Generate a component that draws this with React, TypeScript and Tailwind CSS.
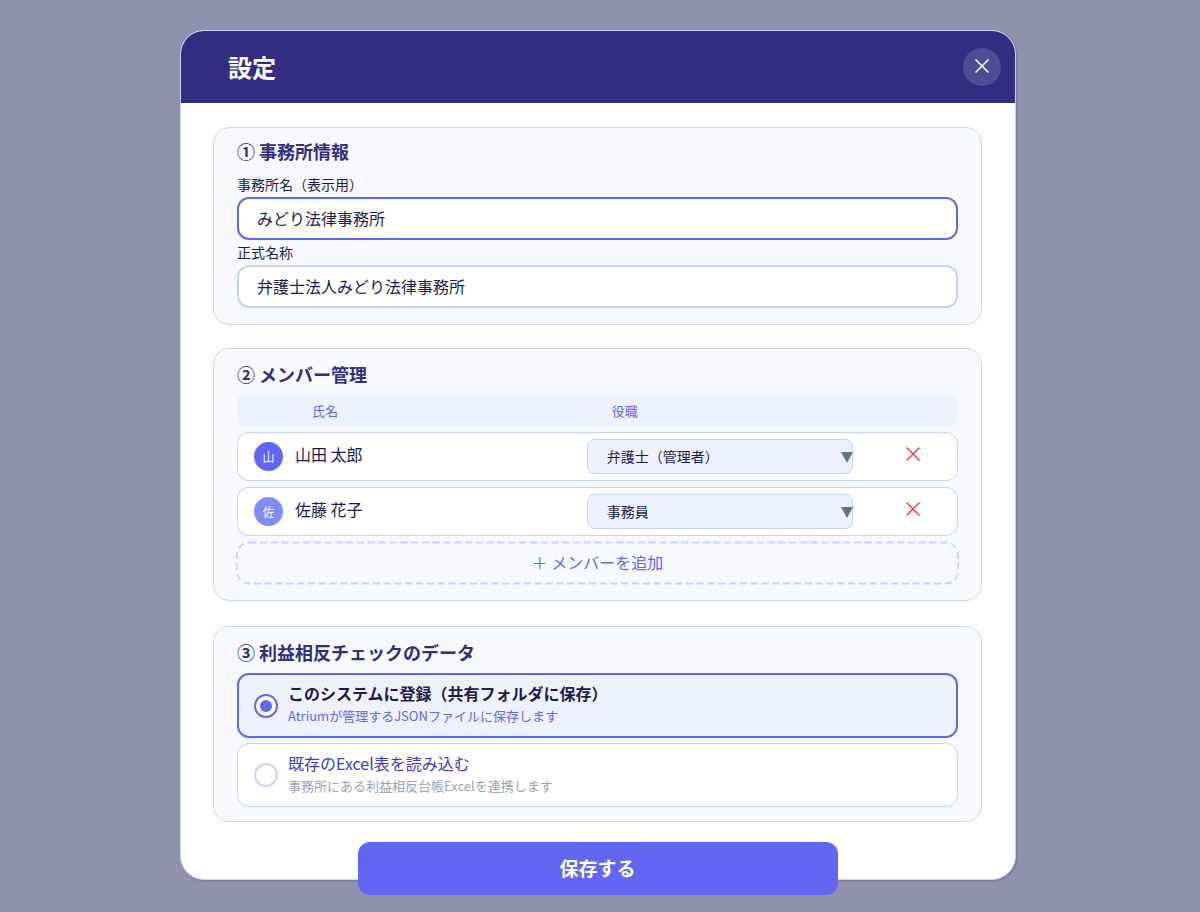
import { useState } from "react";

type Member = { id: number; initial: string; name: string; role: string; avatar: string };

const ROLES = ["弁護士（管理者）", "弁護士", "事務員"];

const INITIAL_MEMBERS: Member[] = [
  { id: 1, initial: "山", name: "山田 太郎", role: "弁護士（管理者）", avatar: "bg-[#6366f1]" },
  { id: 2, initial: "佐", name: "佐藤 花子", role: "事務員", avatar: "bg-[#818cf8]" },
];

const SOURCES = [
  {
    value: "system",
    title: "このシステムに登録（共有フォルダに保存）",
    note: "Atriumが管理するJSONファイルに保存します",
  },
  {
    value: "excel",
    title: "既存のExcel表を読み込む",
    note: "事務所にある利益相反台帳Excelを連携します",
  },
];

function CrossIcon() {
  return (
    <svg width="14" height="14" viewBox="0 0 14 14" fill="none" stroke="currentColor" strokeWidth="1.5" aria-hidden="true">
      <path d="M0.5 0.5L13.5 13.5M13.5 0.5L0.5 13.5" />
    </svg>
  );
}

function Section({ title, className, children }: { title: string; className: string; children: React.ReactNode }) {
  return (
    <section className={`rounded-2xl border border-[#c7d2fe] bg-[#f8f9ff] px-[23px] ${className}`}>
      <h2 className="text-[18px] leading-7 font-bold text-[#312e81]">{title}</h2>
      {children}
    </section>
  );
}

function TextField({ id, label, initial, active }: { id: string; label: string; initial: string; active?: boolean }) {
  const [value, setValue] = useState(initial);
  return (
    <div>
      <label htmlFor={id} className="block text-sm leading-[25px]">
        {label}
      </label>
      <input
        id={id}
        type="text"
        value={value}
        onChange={(e) => setValue(e.target.value)}
        className={`block h-[43px] w-full rounded-xl border-2 bg-white px-[18px] pb-0.5 text-base outline-none ${
          active ? "border-[#6366f1]" : "border-[#c7d2fe]"
        }`}
      />
    </div>
  );
}

export default function App() {
  const [members, setMembers] = useState(INITIAL_MEMBERS);
  const [source, setSource] = useState("system");

  const changeRole = (id: number, role: string) =>
    setMembers(members.map((m) => (m.id === id ? { ...m, role } : m)));
  const removeMember = (id: number) => setMembers(members.filter((m) => m.id !== id));
  const addMember = () =>
    setMembers([...members, { id: Date.now(), initial: "新", name: "新規 メンバー", role: "事務員", avatar: "bg-[#818cf8]" }]);

  return (
    <div className="min-h-screen bg-[#9091ad] pt-[30px] pr-1 pb-8 font-['Noto_Sans_CJK_JP',sans-serif] text-[#1e1b4b]">
      <main className="mx-auto w-full max-w-[836px] rounded-3xl border border-[#c7d2fe] bg-white shadow-[1px_1px_2px_rgba(30,27,75,0.25)]">
        <header className="flex h-[72px] items-center justify-between rounded-t-[23px] bg-[#312e81] pr-[14px] pl-[47px] text-white">
          <h1 className="text-2xl font-bold">設定</h1>
          <button
            type="button"
            aria-label="閉じる"
            className="flex size-[38px] items-center justify-center rounded-full bg-white/15 pb-0.5"
          >
            <CrossIcon />
          </button>
        </header>

        <div className="flex flex-col pt-6 pr-[33px] pl-8">
          <Section title="① 事務所情報" className="pt-[9px] pb-4">
            <div className="pt-[7px]">
              <TextField id="display-name" label="事務所名（表示用）" initial="みどり法律事務所" active />
              <TextField id="official-name" label="正式名称" initial="弁護士法人みどり法律事務所" />
            </div>
          </Section>

          <Section title="② メンバー管理" className="mt-[23px] pt-[11px] pb-4">
            <table className="w-full table-fixed border-separate border-spacing-x-0 border-spacing-y-[6px]">
              <thead>
                <tr className="h-8 text-left text-[13px] text-[#6366f1]">
                  <th scope="col" className="w-[48.5%] rounded-l-lg bg-[#eef2ff] pt-0.5 pr-0 pl-[75px] font-normal">
                    氏名
                  </th>
                  <th scope="col" className="w-[39%] bg-[#eef2ff] pt-0.5 pr-0 pl-[25px] font-normal">
                    役職
                  </th>
                  <th scope="col" className="w-[12.5%] rounded-r-lg bg-[#eef2ff]" aria-label="削除" />
                </tr>
              </thead>
              <tbody>
                {members.map((m) => (
                  <tr key={m.id} className="h-[49px]">
                    <td className="rounded-l-xl border-y border-l border-[#c7d2fe] bg-white p-0 pl-4">
                      <div className="flex items-center gap-3">
                        <span
                          className={`flex size-[29px] items-center justify-center rounded-full text-xs text-white ${m.avatar}`}
                        >
                          {m.initial}
                        </span>
                        <span className="pb-[5px] text-base leading-6">{m.name}</span>
                      </div>
                    </td>
                    <td className="border-y border-[#c7d2fe] bg-white p-0 pr-[15px]">
                      <div className="relative">
                        <select
                          aria-label={`${m.name}の役職`}
                          value={m.role}
                          onChange={(e) => changeRole(m.id, e.target.value)}
                          className="block h-[35px] w-full appearance-none rounded-lg border border-[#c7d2fe] bg-[#eef2ff] pb-0.5 pl-[19px] text-sm outline-none"
                        >
                          {ROLES.map((r) => (
                            <option key={r}>{r}</option>
                          ))}
                        </select>
                        <svg
                          className="pointer-events-none absolute top-[13px] right-0"
                          width="12"
                          height="11"
                          viewBox="0 0 12 11"
                          fill="#64748b"
                          aria-hidden="true"
                        >
                          <path d="M0 0H12L6 11Z" />
                        </svg>
                      </div>
                    </td>
                    <td className="rounded-r-xl border-y border-r border-[#c7d2fe] bg-white p-0 pb-[5px] pl-px">
                      <button
                        type="button"
                        aria-label={`${m.name}を削除`}
                        onClick={() => removeMember(m.id)}
                        className="mx-auto block text-[#ef4444]"
                      >
                        <CrossIcon />
                      </button>
                    </td>
                  </tr>
                ))}
              </tbody>
            </table>
            <button
              type="button"
              onClick={addMember}
              className="relative flex h-[42px] w-full items-center justify-center pb-0.5 text-base text-[#6366f1]"
            >
              <svg className="absolute inset-0 size-full overflow-visible" fill="none" aria-hidden="true">
                <rect
                  x="0"
                  y="0.5"
                  width="100%"
                  height="41"
                  rx="12"
                  stroke="#c7d2fe"
                  strokeWidth="1.8"
                  strokeDasharray="7.2 3.6"
                />
              </svg>
              ＋ メンバーを追加
            </button>
          </Section>

          <Section title="③ 利益相反チェックのデータ" className="mt-[25px] pt-[11px] pb-[14px]">
            <div className="flex flex-col gap-[5px] pt-[7px]">
              {SOURCES.map((s) => {
                const on = s.value === source;
                return (
                  <label
                    key={s.value}
                    className={`flex items-center gap-[10px] rounded-xl ${
                      on
                        ? "h-[65px] border-2 border-[#6366f1] bg-[#eef2ff] px-[15px]"
                        : "h-16 border border-[#c7d2fe] bg-white px-4"
                    }`}
                  >
                    <input
                      type="radio"
                      name="source"
                      checked={on}
                      onChange={() => setSource(s.value)}
                      className="grid size-6 shrink-0 appearance-none place-content-center rounded-full border-2 border-[#c7d2fe] bg-white before:size-3 before:rounded-full checked:border-[#6366f1] checked:before:bg-[#6366f1]"
                    />
                    <span className="flex flex-col pb-[3px]">
                      <span className={`text-base leading-6 ${on ? "font-bold" : "text-[#4338ca]"}`}>{s.title}</span>
                      <span className={`text-[13px] leading-[22px] ${on ? "text-[#6366f1]" : "text-[#9ca3af]"}`}>
                        {s.note}
                      </span>
                    </span>
                  </label>
                );
              })}
            </div>
          </Section>

          <button
            type="button"
            className="mt-5 -mb-4 h-[53px] w-full max-w-[480px] self-center rounded-xl bg-[#6366f1] text-[19px] font-bold text-white"
          >
            保存する
          </button>
        </div>
      </main>
    </div>
  );
}
